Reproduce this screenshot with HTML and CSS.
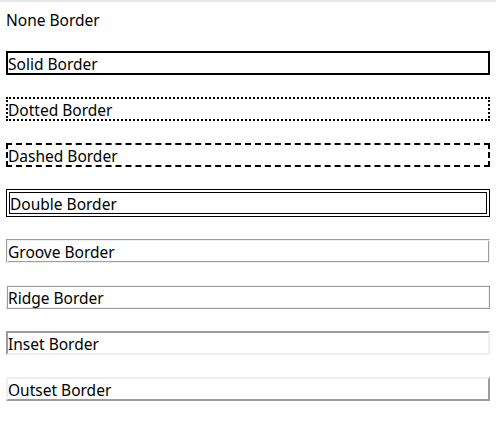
FILE: index.html
```html
<!DOCTYPE html>
<html lang="ko">
<head>
  <meta charset="UTF-8">
  <title>Border Styles</title>
  <link rel="stylesheet" href="styles.css">
</head>
<body>
  <div class="border-list">
    <div class="box none">None Border</div>
    <div class="box solid">Solid Border</div>
    <div class="box dotted">Dotted Border</div>
    <div class="box dashed">Dashed Border</div>
    <div class="box double">Double Border</div>
    <div class="box groove">Groove Border</div>
    <div class="box ridge">Ridge Border</div>
    <div class="box inset">Inset Border</div>
    <div class="box outset">Outset Border</div>
  </div>
</body>
</html>
```

FILE: styles.css
```css
html {
  border-top: 2px solid #e6e6e6;
  background: #fff;
}

body {
  margin: 0;
  padding: 7px 6px 0;
  font-family: "Noto Sans", "Noto Sans CJK KR", sans-serif;
  font-size: 15.5px;
  color: #000;
}

.border-list {
  display: flex;
  flex-direction: column;
  gap: 22px;
}

.box {
  line-height: 19px;
  height: 18px;
  padding-top: 2px;
  white-space: nowrap;
}

.none {
  border: none;
}

.solid {
  border: 2px solid #000;
}

.dotted {
  border: 2px dotted #000;
}

.dashed {
  border: 2px dashed #000;
}

.double {
  border: 4px double #000;
}

/* 2px bevel borders drawn as two 1px rings */
.groove {
  border: 1px solid;
  border-color: #9c9c9c #efefef #efefef #9c9c9c;
  box-shadow: inset 1px 1px #efefef, inset -1px -1px #9c9c9c;
  padding: 3px 1px 1px;
}

.ridge {
  border: 1px solid;
  border-color: #efefef #9c9c9c #9c9c9c #efefef;
  box-shadow: inset 1px 1px #9c9c9c, inset -1px -1px #efefef;
  padding: 3px 1px 1px;
}

.inset {
  border: 2px solid;
  border-color: #9c9c9c #efefef #efefef #9c9c9c;
}

.outset {
  border: 2px solid;
  border-color: #efefef #9c9c9c #9c9c9c #efefef;
}
```
